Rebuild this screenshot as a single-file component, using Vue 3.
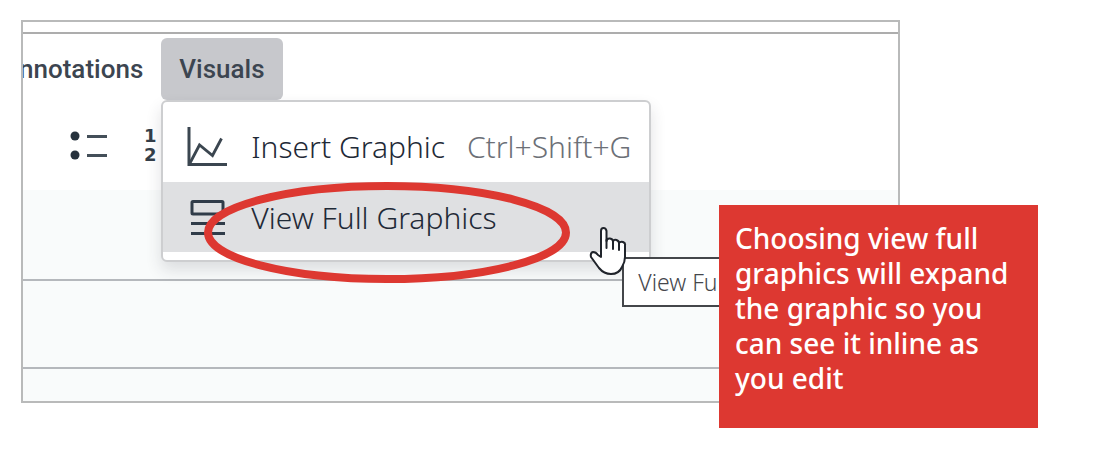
<script setup>
const tabs = ['Annotations', 'Visuals']
const active = 'Visuals'
</script>

<template>
  <main class="stage">
    <section class="editor">
      <div class="title-strip"></div>
      <nav class="menubar">
        <div v-for="tab in tabs" :key="tab" class="menu-slot">
          <button type="button" class="tab" :class="{ active: tab === active }">{{ tab }}</button>
          <div v-if="tab === active" class="dropdown" role="menu">
            <button type="button" class="item" role="menuitem">
              <svg class="icon" viewBox="0 0 40 40" fill="none" stroke="#3b4650" stroke-width="3">
                <path d="M2 0V37.500H40" />
                <path d="M3 36L12.500 18L25.500 28.500L34.500 11.500" stroke-width="2.800" />
              </svg>
              <span>Insert Graphic</span>
              <kbd>Ctrl+Shift+G</kbd>
            </button>
            <button type="button" class="item hovered" role="menuitem">
              <svg class="icon" viewBox="0 0 40 40" fill="none" stroke="#303c49" stroke-width="3">
                <rect x="5" y="3.500" width="31" height="12.500" rx="1" />
                <path d="M4 25.500H38M4 35.500H38" />
              </svg>
              <span>View Full Graphics</span>
            </button>
            <svg class="ring" viewBox="0 0 366 102" fill="none" stroke="#dd3831" stroke-width="8">
              <ellipse cx="183" cy="51.500" rx="179" ry="46.500" />
            </svg>
            <div class="tooltip" role="tooltip">View Full Graphics</div>
            <svg class="pointer" viewBox="0 0 38 50" fill="#fff" stroke="#20242b" stroke-width="2" stroke-linejoin="round" stroke-linecap="round">
              <path d="M12 31V5Q12 2 14.500 2T17.500 5V15Q18 12 21 12.500T24 15.500Q25 13 27.500 14T30 17Q31.500 15 34 16T36 19V31Q36 36 33 41Q30 48 22 48Q15 48 10 42L2 31Q1 27 4 26Q7 26 9 29Z" />
              <path d="M17.500 14V22M24 15V23M30 17V24" />
            </svg>
          </div>
        </div>
      </nav>
      <div class="toolbar">
        <button type="button" class="tool" aria-label="Bulleted list">
          <svg class="bullets" viewBox="0 0 38 30">
            <g fill="#27323d"><circle cx="5" cy="6" r="4.500" /><circle cx="5" cy="25" r="4.500" /></g>
            <path d="M17 6.500H37M17 25.500H37" stroke="#444f59" stroke-width="3" />
          </svg>
        </button>
        <button type="button" class="tool numbers" aria-label="Numbered list">
          <span>1</span><span>2</span>
        </button>
      </div>
      <div class="row first"></div>
      <div class="row second"></div>
      <div class="row last"></div>
    </section>
    <aside class="callout">Choosing view full graphics will expand the graphic so you can see it inline as you edit</aside>
  </main>
</template>

<style>
body {
  margin: 0;
  background: #fff;
}
</style>

<style scoped>
.stage {
  position: relative;
  padding: 20px 194px 46px 21px;
}
.editor {
  overflow: hidden;
  border: 2px solid #b9baba;
  background: #fff;
}
button {
  margin: 0;
  padding: 0;
  border: 0;
  background: none;
  font: inherit;
  color: inherit;
}
.title-strip {
  height: 10px;
  border-bottom: 2px solid #adadad;
}
.menubar {
  display: flex;
  margin: 4px 0 0 -39px;
}
.menu-slot {
  position: relative;
}
.tab {
  height: 62px;
  padding: 0 18px;
  border-radius: 6px;
  font: 500 26px/62px Roboto, sans-serif;
  color: #3c4550;
}
.tab.active {
  background: #c7c8cc;
}
.dropdown {
  position: absolute;
  z-index: 2;
  top: 100%;
  left: 0;
  width: 486px;
  padding-bottom: 8px;
  border: 2px solid #cdced0;
  border-radius: 6px;
  background: #fff;
  box-shadow: 0 8px 16px rgba(40, 40, 60, 0.14);
  font: 300 30px/40px "Noto Sans", "Open Sans", sans-serif;
  color: #1f2a37;
}
.item {
  display: flex;
  align-items: center;
  width: 100%;
  height: 80px;
  padding: 10px 18px 0 24px;
  text-align: left;
  white-space: nowrap;
}
.item.hovered {
  height: 70px;
  padding-top: 2px;
  background: #dfe0e2;
}
.icon {
  width: 40px;
  height: 40px;
  margin-right: 24px;
}
kbd {
  margin-left: auto;
  font: inherit;
  color: #6c7077;
}
.ring {
  position: absolute;
  top: 79px;
  left: 41px;
  width: 366px;
  height: 102px;
}
.tooltip {
  position: absolute;
  top: 155px;
  left: 459px;
  padding: 0 14px;
  border: 2px solid #44464a;
  background: #fff;
  font-size: 23px;
  line-height: 46px;
  white-space: nowrap;
  color: #45474c;
}
.pointer {
  position: absolute;
  top: 124px;
  left: 426px;
  width: 38px;
  height: 50px;
}
.toolbar {
  display: flex;
  align-items: center;
  gap: 36px;
  height: 90px;
  padding-left: 47px;
}
.tool {
  display: flex;
}
.bullets {
  width: 38px;
  height: 30px;
}
.numbers {
  flex-direction: column;
  font: bold 18px/19px "DejaVu Sans", sans-serif;
  color: #343e49;
}
.row {
  background: #f9fbfb;
  border-bottom: 2px solid #b5b8bc;
}
.row.first {
  height: 89px;
}
.row.second {
  height: 86px;
}
.row.last {
  height: 32px;
  border-bottom: 0;
}
.callout {
  position: absolute;
  z-index: 3;
  top: 205px;
  right: 56px;
  box-sizing: border-box;
  width: 319px;
  padding: 16px 16px 32px;
  background: #dd3831;
  font: 500 28px/35px "Noto Sans", sans-serif;
  color: #fff;
}
</style>
